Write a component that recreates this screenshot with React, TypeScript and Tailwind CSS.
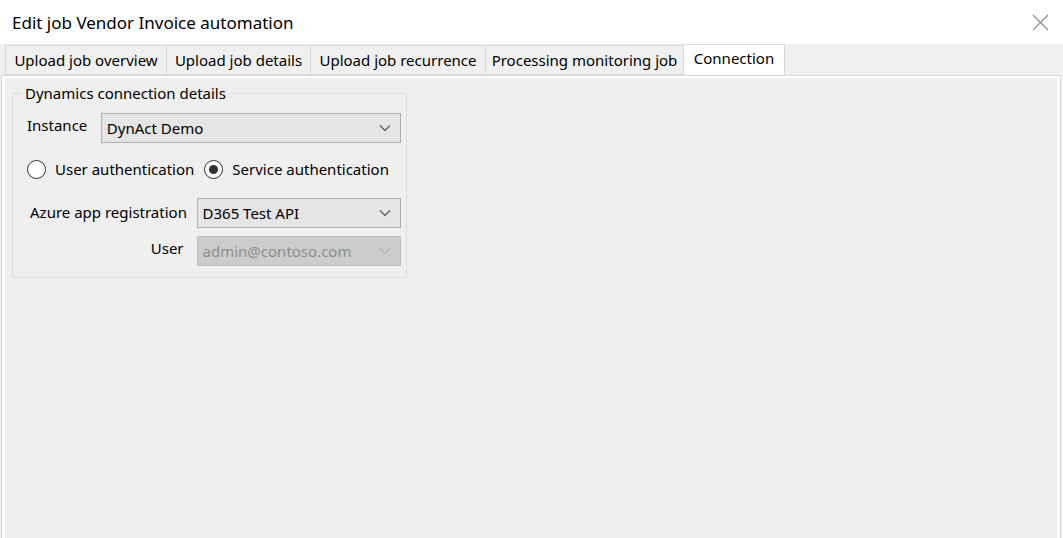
import React from "react";

const font = { fontFamily: '"Noto Sans", "Open Sans", sans-serif' };

function Chevron({ color = "#555" }: { color?: string }) {
  return (
    <svg width="12" height="8" viewBox="0 0 12 8" className="shrink-0">
      <path d="M1 1.5 L6 6.5 L11 1.5" fill="none" stroke={color} strokeWidth="1.2" />
    </svg>
  );
}

function Select({ text, w, disabled = false }: { text: string; w: string; disabled?: boolean }) {
  return (
    <div
      className={`${w} h-[30px] flex items-center justify-between pl-[5px] pr-[9px] border ${
        disabled ? "bg-[#cccccc] border-[#bfbfbf] text-[#8d8d8d]" : "bg-[#e5e5e5] border-[#adadad] text-black"
      } text-[15px]`}
    >
      <span>{text}</span>
      <Chevron color={disabled ? "#b0b0b0" : "#555"} />
    </div>
  );
}

function Radio({ checked }: { checked: boolean }) {
  return (
    <div className="w-[19px] h-[19px] rounded-full border border-[#333] bg-white flex items-center justify-center shrink-0">
      {checked && <div className="w-[9px] h-[9px] rounded-full bg-[#333]" />}
    </div>
  );
}

export default function App() {
  const tabs = [
    { label: "Upload job overview", w: "w-[161px]" },
    { label: "Upload job details", w: "w-[144px]" },
    { label: "Upload job recurrence", w: "w-[175px]" },
    { label: "Processing monitoring job", w: "w-[198px]" },
  ];
  return (
    <div className="w-[1063px] h-[538px] overflow-hidden bg-[#f0f0f0] flex flex-col text-black" style={font}>
      <div className="h-[44px] bg-white flex items-center justify-between pl-[12px] pr-[14px] shrink-0">
        <span className="text-[17px] leading-none">Edit job Vendor Invoice automation</span>
        <svg width="17" height="17" viewBox="0 0 17 17">
          <path d="M1 1 L16 16 M16 1 L1 16" stroke="#8a8a8a" strokeWidth="1.1" />
        </svg>
      </div>
      <div className="flex items-end h-[31px] pl-[5px] shrink-0">
        {tabs.map((t) => (
          <div
            key={t.label}
            className={`${t.w} h-[30px] flex items-center justify-center border border-[#d9d9d9] border-r-0 bg-[#f0f0f0] text-[15px] leading-none`}
          >
            {t.label}
          </div>
        ))}
        <div className="w-[102px] h-[31px] flex items-start justify-center pt-[6px] bg-white border border-[#d9d9d9] border-b-0 text-[15px] leading-none">
          Connection
        </div>
      </div>
      <div className="flex-1 ml-[1px] mr-[2px] border border-[#d9d9d9] border-b-0 bg-[#f0f0f0] flex">
        <div className="flex-1 border-l-[3px] border-r-[3px] border-t-[2px] border-white bg-[#efefef] pl-[7px] pt-[7px]">
          <div className="relative w-[395px] h-[185px] border border-[#dcdcdc] rounded-[2px] mt-[8px]">
            <span className="absolute -top-[11px] left-[9px] px-[3px] bg-[#efefef] text-[15px] leading-[20px]">
              Dynamics connection details
            </span>
            <div className="flex flex-col pt-[19px] pl-[14px] pr-[5px]">
              <div className="flex items-start">
                <span className="text-[15px] w-[74px] leading-none pt-[5px]">Instance</span>
                <Select text="DynAct Demo" w="w-[301px]" />
              </div>
              <div className="flex items-center mt-[15px] h-[22px] text-[15px]">
                <Radio checked={false} />
                <span className="ml-[9px]">User authentication</span>
                <div className="ml-[10px]">
                  <Radio checked={true} />
                </div>
                <span className="ml-[9px]">Service authentication</span>
              </div>
              <div className="flex items-center mt-[18px]">
                <span className="text-[15px] w-[170px] pl-[3px] -mt-[2px]">Azure app registration</span>
                <Select text="D365 Test API" w="w-[205px]" />
              </div>
              <div className="flex items-center mt-[8px]">
                <span className="text-[15px] w-[170px] text-right pr-[13px] -mt-[6px]">User</span>
                <Select text="admin@contoso.com" w="w-[205px]" disabled />
              </div>
            </div>
          </div>
        </div>
      </div>
    </div>
  );
}
